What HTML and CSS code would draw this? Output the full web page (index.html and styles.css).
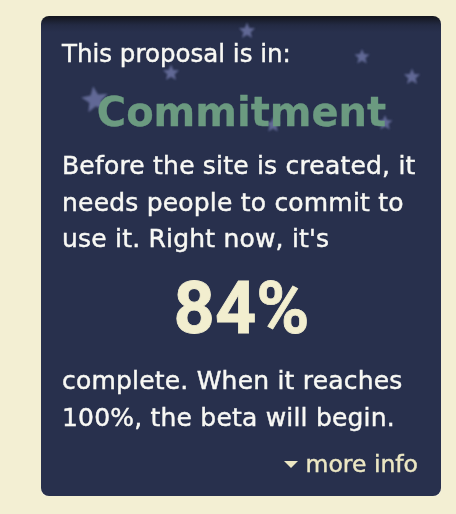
FILE: index.html
```html
<!DOCTYPE html>
<html>
<head>
<meta charset="utf-8">
<link rel="stylesheet" href="styles.css">
</head>
<body>
<div class="card">
  <svg class="stars" viewBox="0 0 400 480" width="400" height="480" aria-hidden="true">
    <defs>
      <filter id="soft" x="-50%" y="-50%" width="200%" height="200%">
        <feGaussianBlur stdDeviation="0.9"/>
      </filter>
      <polygon id="star" points="0,-1 0.2645,-0.364 0.951,-0.309 0.428,0.139 0.588,0.809 0,0.45 -0.588,0.809 -0.428,0.139 -0.951,-0.309 -0.2645,-0.364"/>
    </defs>
    <g class="star-group" filter="url(#soft)">
      <use href="#star" transform="translate(206 15) scale(8.5)"/>
      <use href="#star" transform="translate(321 41) scale(8)"/>
      <use href="#star" transform="translate(371 61) scale(8.5)"/>
      <use href="#star" transform="translate(130 57) scale(8.5)"/>
      <use href="#star" transform="translate(54 84) rotate(-8) scale(14)"/>
      <use href="#star" transform="translate(232 109) scale(8)"/>
      <use href="#star" transform="translate(344 107) scale(8)"/>
    </g>
  </svg>
  <div class="content">
    <p class="lead">This proposal is in:</p>
    <h2 class="phase">Commitment</h2>
    <p class="text">Before the site is created, it needs people to commit to use it. Right now, it's</p>
    <div class="percent">84%</div>
    <p class="text text-after">complete. When it reaches 100%, the beta will begin.</p>
    <div class="more-row">
      <a class="more" href="#"><span class="tri"></span>more info</a>
    </div>
  </div>
</div>
</body>
</html>
```

FILE: styles.css
```css
html, body {
  margin: 0;
  padding: 0;
}

body {
  background: #f3efd3;
  font-family: "DejaVu Sans", "Liberation Sans", sans-serif;
}

.card {
  position: relative;
  box-sizing: border-box;
  width: 400px;
  margin: 16px 15px 0 41px;
  padding: 19.5px 20px 17px 21px;
  border-radius: 8px;
  background: linear-gradient(#13151c 0px, #232a43 9px, #28304d 16px, #28304d 100%);
  box-shadow: 0 1px 0 rgba(255, 255, 255, 0.6);
  overflow: hidden;
}

.stars {
  position: absolute;
  left: 0;
  top: 0;
  z-index: 0;
}

.star-group {
  fill: #6c73a3;
  opacity: 0.85;
}

.content {
  position: relative;
  z-index: 1;
  display: flex;
  flex-direction: column;
}

.lead {
  margin: 0;
  color: #f8f8f4;
  font-size: 24.5px;
  line-height: 36px;
  -webkit-text-stroke: 0.45px #f8f8f4;
}

.phase {
  margin: 16.5px 0 0;
  color: #6b9a80;
  font-size: 40px;
  font-weight: bold;
  line-height: 48px;
  text-align: center;
  -webkit-text-stroke: 0.3px #6b9a80;
}

.text {
  margin: 12px 0 0;
  color: #f8f8f4;
  font-size: 25px;
  letter-spacing: 0.2px;
  line-height: 36.5px;
  -webkit-text-stroke: 0.45px #f8f8f4;
}

.percent {
  margin-top: 11px;
  color: #f2eecf;
  font-family: Roboto, "DejaVu Sans", sans-serif;
  font-size: 72px;
  font-weight: bold;
  line-height: 80px;
  text-align: center;
  -webkit-text-stroke: 0.8px #f2eecf;
}

.text-after {
  margin-top: 14.5px;
}

.more-row {
  display: flex;
  justify-content: flex-end;
  margin-top: 12.5px;
}

.more {
  display: flex;
  align-items: center;
  gap: 8px;
  margin-right: 3px;
  color: #ece7c3;
  font-size: 23.5px;
  line-height: 30px;
  text-decoration: none;
  -webkit-text-stroke: 0.45px #ece7c3;
}

.tri {
  width: 0;
  height: 0;
  margin-top: 2px;
  border-left: 7.5px solid transparent;
  border-right: 7.5px solid transparent;
  border-top: 7.5px solid #ece7c3;
}
```
